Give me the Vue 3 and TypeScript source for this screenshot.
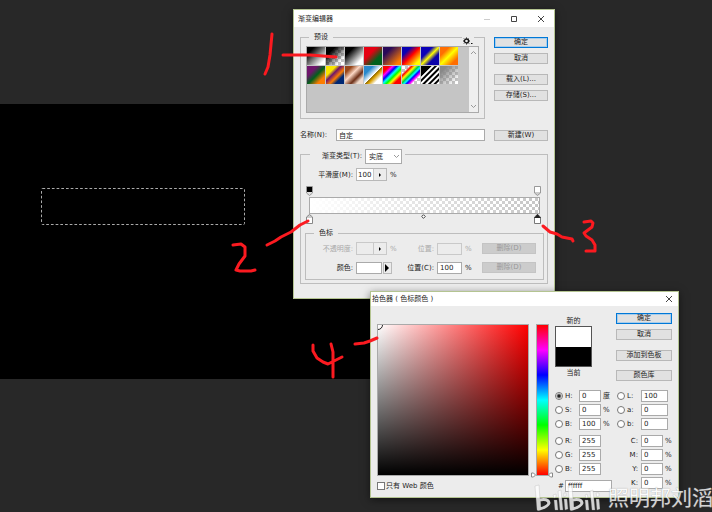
<script setup lang="ts">
import { ref } from 'vue'

interface Channel {
  id: string
  label: string
  value: string
  unit: string
  radio: boolean
  wide?: boolean
}

const presets: string[] = [
  'fg-bg', 'fg-clear', 'black-white', 'red-green', 'violet-orange', 'blue-red-yellow', 'blue-yellow-blue', 'orange-yellow',
  'violet-green', 'yellow-violet', 'copper', 'chrome', 'spectrum', 'rainbow', 'stripes', 'density',
]

const name = ref('自定')
const kind = ref('实底')
const smoothness = ref('100')
const stopPosition = ref('100')
const picked = ref('h')
const webOnly = ref(false)
const hue = ref(0)
const hex = ref('ffffff')

const leftTop = ref<Channel[]>([
  { id: 'h', label: 'H:', value: '0', unit: '度', radio: true },
  { id: 's', label: 'S:', value: '0', unit: '%', radio: true },
  { id: 'br', label: 'B:', value: '100', unit: '%', radio: true },
])
const leftBottom = ref<Channel[]>([
  { id: 'r', label: 'R:', value: '255', unit: '', radio: true },
  { id: 'g', label: 'G:', value: '255', unit: '', radio: true },
  { id: 'bl', label: 'B:', value: '255', unit: '', radio: true },
])
const rightTop = ref<Channel[]>([
  { id: 'l', label: 'L:', value: '100', unit: '', radio: true, wide: true },
  { id: 'la', label: 'a:', value: '0', unit: '', radio: true, wide: true },
  { id: 'lb', label: 'b:', value: '0', unit: '', radio: true, wide: true },
])
const rightBottom = ref<Channel[]>([
  { id: 'c', label: 'C:', value: '0', unit: '%', radio: false },
  { id: 'm', label: 'M:', value: '0', unit: '%', radio: false },
  { id: 'y', label: 'Y:', value: '0', unit: '%', radio: false },
  { id: 'k', label: 'K:', value: '0', unit: '%', radio: false },
])
const columns = [
  { key: 'left', groups: [leftTop, leftBottom] },
  { key: 'right', groups: [rightTop, rightBottom] },
]
</script>

<template>
  <main class="desktop">
    <div class="canvas">
      <svg class="marquee" viewBox="0 0 204 37" aria-hidden="true">
        <rect x="0.5" y="0.5" width="203" height="36" rx="1" />
      </svg>
    </div>

    <section class="window editor" aria-label="渐变编辑器">
      <header class="titlebar">
        <h1>渐变编辑器</h1>
        <div class="controls">
          <button type="button" aria-label="最小化" disabled>
            <svg viewBox="0 0 8 8"><path d="M1 4.5H7" stroke="#ccc" /></svg>
          </button>
          <button type="button" aria-label="最大化">
            <svg viewBox="0 0 8 8"><path d="M1.5 1.5H6.5V6.5H1.5Z" stroke="#444" /></svg>
          </button>
          <button type="button" aria-label="关闭">
            <svg viewBox="0 0 8 8"><path d="M1 1L7 7M7 1L1 7" stroke="#444" /></svg>
          </button>
        </div>
      </header>

      <div class="editor-body">
        <div class="top">
          <fieldset class="group preset-group">
            <legend>预设</legend>
            <button type="button" class="gear" aria-label="预设菜单">
              <svg viewBox="0 0 10 8">
                <circle cx="3.5" cy="4" r="2" fill="none" stroke="#111" stroke-width="1.3" />
                <path d="M3.5 .5V1.5M3.5 6.5V7.5M0 4H1M6 4H7M1 1.5L1.8 2.3M5.2 5.7L6 6.5M6 1.5L5.2 2.3M1.8 5.7L1 6.5" stroke="#111" />
                <path d="M8 6H9.5V7H8Z" fill="#111" />
              </svg>
            </button>
            <div class="preset-box">
              <div class="preset-grid">
                <button v-for="p in presets" :key="p" type="button" class="preset" :class="p" :aria-label="p"></button>
              </div>
              <div class="scrollbar">
                <svg viewBox="0 0 7 5"><path d="M1 4L3.5 1.5L6 4" /></svg>
                <svg viewBox="0 0 7 5"><path d="M1 1L3.5 3.5L6 1" /></svg>
              </div>
            </div>
          </fieldset>
          <div class="actions">
            <button type="button" class="btn primary">确定</button>
            <button type="button" class="btn">取消</button>
            <button type="button" class="btn spaced">载入(L)...</button>
            <button type="button" class="btn">存储(S)...</button>
          </div>
        </div>

        <div class="name-row">
          <label for="name">名称(N):</label>
          <input id="name" v-model="name" class="field" type="text" />
          <button type="button" class="btn">新建(W)</button>
        </div>

        <fieldset class="group type-group">
          <legend class="type-legend">
            <label for="kind">渐变类型(T):</label>
            <span class="select-wrap">
              <select id="kind" v-model="kind">
                <option>实底</option>
              </select>
              <svg viewBox="0 0 7 5"><path d="M1 1L3.5 3.5L6 1" /></svg>
            </span>
          </legend>
          <div class="smooth-row">
            <label for="smooth">平滑度(M):</label>
            <span class="combo">
              <input id="smooth" v-model="smoothness" type="text" />
              <button type="button" aria-label="平滑度滑块"><svg viewBox="0 0 4 6"><path d="M1 1L3 3L1 5Z" /></svg></button>
            </span>
            <span>%</span>
          </div>

          <div class="ramp">
            <div class="stops">
              <button type="button" aria-label="起点不透明度">
                <svg viewBox="0 0 7 10"><path d="M.5 .5H6.5V7L3.5 9.5L.5 7Z" fill="#ddd" stroke="#999" /><path d="M1 1H6V6H1Z" fill="#000" /></svg>
              </button>
              <button type="button" aria-label="终点不透明度">
                <svg viewBox="0 0 7 10"><path d="M.5 .5H6.5V7L3.5 9.5L.5 7Z" fill="#ccc" stroke="#999" /><path d="M1 1H6V6H1Z" fill="#fff" /></svg>
              </button>
            </div>
            <div class="ramp-bar"></div>
            <div class="stops">
              <button type="button" aria-label="起点颜色">
                <svg viewBox="0 0 7 10"><path d="M.5 9.5H6.5V3L3.5 .5L.5 3Z" fill="#ccc" stroke="#888" /><path d="M1 4H6V9H1Z" fill="#fff" /></svg>
              </button>
              <svg class="midpoint" viewBox="0 0 5 5"><path d="M2.5 .7L4.3 2.5L2.5 4.3L.7 2.5Z" fill="#fff" stroke="#444" /></svg>
              <button type="button" aria-label="终点颜色">
                <svg viewBox="0 0 7 10"><path d="M.5 9.5H6.5V3L3.5 .5L.5 3Z" fill="#fff" stroke="#777" /><path d="M0 4L3.5 0L7 4Z" fill="#222" /></svg>
              </button>
            </div>
          </div>

          <fieldset class="group stop-group">
            <legend>色标</legend>
            <div class="stop-row disabled">
              <label for="opacity">不透明度:</label>
              <span class="combo">
                <input id="opacity" type="text" disabled />
                <button type="button" disabled aria-label="不透明度滑块"><svg viewBox="0 0 4 6"><path d="M1 1L3 3L1 5Z" /></svg></button>
              </span>
              <span>%</span>
              <label for="opos">位置:</label>
              <input id="opos" class="field" type="text" disabled />
              <span>%</span>
              <button type="button" class="btn" disabled>删除(D)</button>
            </div>
            <div class="stop-row">
              <label for="color">颜色:</label>
              <span class="color-combo">
                <button id="color" type="button" class="color-well" aria-label="颜色"></button>
                <button type="button" class="color-arrow" aria-label="颜色菜单"><svg viewBox="0 0 5 8"><path d="M0 0L4 4L0 8Z" /></svg></button>
              </span>
              <span></span>
              <label for="cpos">位置(C):</label>
              <input id="cpos" v-model="stopPosition" class="field" type="text" />
              <span>%</span>
              <button type="button" class="btn" disabled>删除(D)</button>
            </div>
          </fieldset>
        </fieldset>
      </div>
    </section>

    <section class="window picker" aria-label="拾色器">
      <header class="titlebar">
        <h1>拾色器 ( 色标颜色 )</h1>
        <div class="controls">
          <button type="button" aria-label="关闭">
            <svg viewBox="0 0 8 8"><path d="M1 1L7 7M7 1L1 7" stroke="#444" /></svg>
          </button>
        </div>
      </header>
      <div class="picker-body">
        <div class="spectrum-side">
          <div class="spectra">
            <div class="sv-field">
              <svg viewBox="0 0 5 5"><path d="M4.5 0A4.5 4.5 0 0 1 0 4.5" /></svg>
            </div>
            <div class="hue-wrap">
              <input v-model.number="hue" class="hue" type="range" min="0" max="359" aria-label="色相" />
              <svg class="hue-handles" viewBox="0 0 22 6"><path d="M.5 1V5H2.5L4.5 3L2.5 1ZM21.5 1V5H19.5L17.5 3L19.5 1Z" /></svg>
            </div>
          </div>
          <label class="web"><input v-model="webOnly" type="checkbox" />只有 Web 颜色</label>
        </div>

        <div class="value-side">
          <div class="value-top">
            <div class="compare">
              <span>新的</span>
              <div class="chips"><i class="new"></i><i class="current"></i></div>
              <span>当前</span>
            </div>
            <div class="actions">
              <button type="button" class="btn primary">确定</button>
              <button type="button" class="btn">取消</button>
              <button type="button" class="btn spaced">添加到色板</button>
              <button type="button" class="btn wider">颜色库</button>
            </div>
          </div>
          <div class="channels">
            <div v-for="col in columns" :key="col.key" class="channel-col" :class="col.key">
              <div v-for="(group, gi) in col.groups" :key="gi" class="channel-group">
                <div v-for="ch in group.value" :key="ch.id" class="channel">
                  <input v-if="ch.radio" v-model="picked" type="radio" name="channel" :value="ch.id" :aria-label="ch.label" />
                  <label :for="ch.id" :class="{ plain: !ch.radio }">{{ ch.label }}</label>
                  <input :id="ch.id" v-model="ch.value" class="field" :class="{ wide: ch.wide }" type="text" />
                  <span>{{ ch.unit }}</span>
                </div>
              </div>
              <div v-if="col.key === 'left'" class="hex">
                <label for="hex">#</label>
                <input id="hex" v-model="hex" class="field" type="text" />
              </div>
            </div>
          </div>
        </div>
      </div>
    </section>

    <svg class="notes" viewBox="0 0 712 512" aria-hidden="true">
      <path d="M272 34L270 55L268 67L265 74" />
      <path d="M283 55L310 55L336 57" />
      <path d="M233 245L241 244L245 247V256L239 264L236 270L240 271L251 271L255 270" />
      <path d="M267 245L275 241L281 237L291 232L300 225L308 221" />
      <path d="M543 226L550 232L557 234L562 237L572 239L573 241" />
      <path d="M584 222L591 221L593 223L592 227L584 233L586 236L592 240L595 245V251L586 251" />
      <path d="M355 344L364 343L370 341L377 338" />
      <path d="M313 345V351L317 358L323 362L328 364L334 361L342 357M331 344L333 352V377" />
    </svg>

    <div class="watermark">
      <svg viewBox="0 0 68 28" aria-hidden="true">
        <path class="stem" d="M3 2L7 1L8 16L9 26L5 26ZM36 2L40 1L41 16L42 26L38 26ZM22 16L25 16L26 26L23 26ZM26 7L29 6L31 26L28 26ZM32 15L35 15L36 25L33 26ZM53 16L56 16L57 26L54 26ZM58 7L61 6L63 26L60 26ZM64 15L67 15L68 25L65 26ZM21 11L24 10V13L22 14ZM32 9L34 9V12L32 13ZM53 11L55 10L56 13L54 14ZM64 9L67 9V12L65 13Z" />
        <path class="bowl" d="M7 16Q16 14 17 19Q16 23 7 25ZM40 16Q49 14 50 19Q49 23 40 25Z" />
      </svg>
      <span>照明邦刘滔</span>
    </div>
  </main>
</template>

<style>
body {
  background: #282828;
}
</style>

<style scoped>
* {
  box-sizing: border-box;
}
.desktop {
  position: relative;
  min-height: 100vh;
  padding-top: 104px;
  overflow: hidden;
  background: #282828;
  color: #222;
  font: 7px/10px "DejaVu Sans", "Noto Sans CJK SC", sans-serif;
}
button,
input,
select {
  margin: 0;
  padding: 0;
  border: 0;
  background: none;
  color: inherit;
  font: inherit;
}
svg {
  display: block;
}
.canvas {
  width: 60%;
  height: 275px;
  padding: 84px 0 0 41px;
  background: #000;
}
.marquee {
  width: 204px;
  height: 37px;
}
.marquee rect {
  fill: none;
  stroke: #aaa;
  stroke-dasharray: 2.7 2;
}
.window {
  position: absolute;
  border: 1px solid #b4c491;
  background: #ececec;
  box-shadow: 0 2px 8px rgba(0, 0, 0, 0.5);
}
.editor {
  left: 293px;
  top: 9px;
  width: 262px;
}
.picker {
  left: 370px;
  top: 291px;
  width: 309px;
}
.titlebar {
  display: flex;
  align-items: center;
  justify-content: space-between;
  height: 17px;
  padding: 0 9px 0 4px;
  background: #fff;
}
.picker .titlebar {
  height: 14px;
  padding: 0 5px 0 1px;
}
h1 {
  margin: 0;
  font: inherit;
}
.controls {
  display: flex;
  gap: 19px;
}
.controls svg {
  width: 8px;
  height: 8px;
  fill: none;
}
.editor-body {
  padding: 5px 6px 14px;
}
.top {
  display: grid;
  grid-template-columns: 1fr 54px;
  gap: 9px;
}
.group {
  position: relative;
  min-width: 0;
  margin: 0;
  padding: 0;
  border: 1px solid #bdbdbd;
}
.group legend {
  margin-left: 8px;
  padding: 0 5px;
}
.preset-group {
  padding: 4px 5px 5px;
}
.preset-group legend {
  margin-left: 3px;
}
.gear {
  position: absolute;
  top: -5px;
  right: 10px;
  padding: 0 1px;
  background: #ececec;
}
.gear svg {
  width: 10px;
  height: 8px;
}
.preset-box {
  display: flex;
  justify-content: space-between;
  height: 67px;
  border: 1px solid #aaa;
  background: #c5c5c5;
}
.preset-grid {
  display: grid;
  grid-template-columns: repeat(8, 18px);
  grid-auto-rows: 18px;
  align-content: start;
  gap: 1px;
}
.preset {
  --checker: repeating-conic-gradient(#c4c4c4 0 25%, #fff 0 50%) 0 0 / 6px 6px;
}
.fg-bg { background: linear-gradient(135deg, #000 20%, #fff 85%); }
.fg-clear { background: linear-gradient(135deg, #000 25%, transparent 80%), var(--checker); }
.black-white { background: linear-gradient(135deg, #000 25%, #fff 80%); }
.red-green { background: linear-gradient(135deg, #e60012 35%, #00601b 70%); }
.violet-orange { background: linear-gradient(135deg, #290a59 25%, #ff7c00 85%); }
.blue-red-yellow { background: linear-gradient(135deg, #0a00b2 25%, #f00 50%, #fffc00 85%); }
.blue-yellow-blue { background: linear-gradient(135deg, #0b01b8 32%, #fdfa03 50%, #0b02aa 68%); }
.orange-yellow { background: linear-gradient(135deg, #ff6e02 25%, #ff0 50%, #ff6d00 80%); }
.violet-green { background: linear-gradient(135deg, #6f156c 28%, #00601b 52%, #fd7c00 78%); }
.yellow-violet { background: linear-gradient(135deg, #f9e600 28%, #6f156c 42%, #fd7c00 60%, #002874 75%); }
.copper { background: linear-gradient(135deg, #97461a 20%, #fbd8c5 42%, #6c2e16 65%, #efdbcd 82%); }
.chrome { background: linear-gradient(135deg, #2989cc 25%, #fff 50%, #906a00 53%, #d99f00 60%, #fff 78%); }
.spectrum { background: linear-gradient(135deg, #f00 18%, #f0f 28%, #00f 38%, #0ff 48%, #0f0 58%, #ff0 68%, #f00 80%); }
.rainbow { background: linear-gradient(135deg, transparent 20%, #f00 27%, #ff0 37%, #0c4 47%, #0ff 55%, #00f 62%, #f0f 70%, transparent 78%), var(--checker); }
.stripes { background: linear-gradient(135deg, #000 28%, transparent 28%), repeating-linear-gradient(135deg, #fff 0 1px, #000 2px 3px, #fff 4px); }
.density { background: linear-gradient(135deg, #888 20%, transparent 90%), var(--checker); }
.scrollbar {
  display: flex;
  flex-direction: column;
  justify-content: space-between;
  width: 9px;
  padding: 3px 1px;
  background: #efefef;
}
.scrollbar svg,
.select-wrap svg {
  width: 7px;
  height: 5px;
  fill: none;
  stroke: #999;
}
.actions {
  display: flex;
  flex-direction: column;
  gap: 5px;
}
.top .actions {
  padding-top: 5px;
}
.btn {
  height: 11px;
  border: 1px solid #b8b8b8;
  background: #e1e1e1;
  line-height: 9px;
  text-align: center;
  white-space: nowrap;
}
.btn.primary {
  border-color: #0078d7;
  box-shadow: inset 0 0 0 1px #a9cdea;
}
.btn.spaced {
  margin-top: 5px;
}
.btn.wider {
  margin-top: 4px;
}
.btn:disabled {
  border-color: #c4c4c4;
  background: #ccc;
  color: #999;
}
.field {
  min-width: 0;
  height: 12px;
  padding: 0 2px;
  border: 1px solid #aaa;
  background: #fff;
}
.name-row {
  display: grid;
  grid-template-columns: 36px 1fr 54px;
  align-items: center;
  margin-top: 10px;
}
.name-row .field {
  margin-right: 9px;
}
.type-group {
  margin-top: 8px;
  padding: 8px 3px 3px 4px;
}
.group .type-legend {
  display: flex;
  height: 11px;
  margin-left: 5px;
  padding: 0 3px 0 12px;
  line-height: 15px;
}
.select-wrap {
  position: relative;
  height: 15px;
  margin-left: 3px;
}
.select-wrap svg {
  position: absolute;
  right: 2px;
  top: 5px;
}
select {
  appearance: none;
  width: 37px;
  height: 15px;
  padding-left: 3px;
  border: 1px solid #aaa;
  background: #fff;
  vertical-align: top;
}
.smooth-row {
  display: grid;
  grid-template-columns: 48px 31px 1fr;
  gap: 3px;
  align-items: center;
}
.smooth-row label,
.stop-row label {
  text-align: right;
  white-space: nowrap;
}
.combo {
  display: flex;
  height: 13px;
  border: 1px solid #b8b8b8;
}
.combo input {
  width: 17px;
  padding-left: 1px;
  border-right: 1px solid #c8c8c8;
  background: #fff;
}
.combo button {
  display: flex;
  flex: 1;
  align-items: center;
  justify-content: center;
}
.combo svg {
  width: 4px;
  height: 6px;
}
.ramp {
  margin-top: 5px;
}
.stops {
  display: flex;
  justify-content: space-between;
  padding: 0 3px 0 1px;
}
.stops button svg {
  width: 7px;
  height: 10px;
}
.midpoint {
  width: 5px;
  height: 5px;
}
.ramp-bar {
  height: 17px;
  margin: 1px 4px 0;
  border: 1px solid #aaa;
  background:
    linear-gradient(90deg, #fff, transparent),
    repeating-conic-gradient(#c6c6c6 0 25%, #fff 0 50%) 0 0 / 6px 6px;
}
.stop-group {
  margin-top: 4px;
  padding: 4px 7px 5px 0;
}
.stop-row {
  display: grid;
  grid-template-columns: 47px 31px 8px 33px 25px 1fr 54px;
  gap: 3px;
  align-items: center;
  height: 13px;
}
.stop-row + .stop-row {
  margin-top: 6px;
}
.stop-row.disabled {
  color: #aaa;
}
.disabled .field,
.disabled .combo,
.disabled .combo input {
  border-color: #c9c9c9;
  background: #ececec;
}
.color-combo {
  display: flex;
  gap: 1px;
  margin-right: -5px;
}
.color-well {
  width: 26px;
  height: 12px;
  border: 1px solid #aaa;
  background: #fff;
}
.color-arrow {
  display: grid;
  place-items: center;
  width: 9px;
  height: 12px;
  border: 1px solid #bbb;
}
.color-arrow svg {
  width: 5px;
  height: 8px;
}
.picker-body {
  display: flex;
  gap: 6px;
  padding: 7px 6px 5px;
}
.spectrum-side {
  padding-top: 11px;
}
.spectra {
  display: flex;
  gap: 7px;
}
.sv-field {
  width: 152px;
  height: 152px;
  border: 1px solid #aaa;
  background:
    linear-gradient(0deg, #000, transparent),
    linear-gradient(90deg, #fff, #f00);
}
.sv-field svg {
  width: 5px;
  height: 5px;
  fill: none;
  stroke: #222;
}
.hue-wrap {
  position: relative;
}
.hue {
  display: block;
  appearance: none;
  writing-mode: vertical-lr;
  width: 13px;
  height: 152px;
  border: 1px solid #aaa;
  background: linear-gradient(#f00, #f0f, #00f, #0ff, #0f0, #ff0, #f00);
}
.hue::-webkit-slider-thumb {
  appearance: none;
  width: 11px;
  height: 1px;
  background: transparent;
}
.hue-handles {
  position: absolute;
  bottom: -2px;
  left: -5px;
  width: 22px;
  height: 6px;
  fill: #fff;
  stroke: #888;
}
.web {
  display: flex;
  gap: 1px;
  align-items: center;
  margin-top: 5px;
}
input[type="checkbox"] {
  appearance: none;
  width: 8px;
  height: 8px;
  border: 1px solid #777;
  background: #fff;
}
input[type="radio"] {
  appearance: none;
  flex: none;
  width: 8px;
  height: 8px;
  border: 1px solid #777;
  border-radius: 50%;
  background: #fff;
}
input[type="radio"]:checked {
  background: radial-gradient(circle, #222 1px, #fff 3px);
}
.value-side {
  flex: 1;
}
.value-top {
  display: flex;
  justify-content: space-between;
}
.value-top .actions {
  width: 56px;
}
.compare {
  padding-top: 3px;
  text-align: center;
}
.chips {
  display: grid;
  width: 37px;
  height: 41px;
  margin: 0 0 1px;
  border: 1px solid #555;
}
.new {
  background: #fff;
}
.current {
  background: #000;
}
.channels {
  display: grid;
  grid-template-columns: 62px 1fr;
  margin-top: 9px;
}
.channel-group {
  display: grid;
  gap: 2px;
}
.channel-group + .channel-group {
  margin-top: 5px;
}
.channel {
  display: flex;
  align-items: center;
  height: 12px;
}
.channel label {
  width: 16px;
  padding-left: 2px;
}
.channel label.plain {
  width: 24px;
  padding-right: 3px;
  text-align: right;
}
.channel .field {
  width: 22px;
  margin-right: 2px;
}
.channel .field.wide {
  width: 27px;
}
.hex {
  display: flex;
  gap: 1px;
  align-items: center;
  margin-top: 5px;
  padding-left: 3px;
}
.hex .field {
  width: 47px;
}
.notes {
  position: absolute;
  top: 0;
  left: 0;
  width: 712px;
  height: 512px;
  fill: none;
  stroke: #fb1a20;
  stroke-width: 3;
  stroke-linecap: round;
  stroke-linejoin: round;
  pointer-events: none;
}
.watermark {
  position: absolute;
  top: 484px;
  left: 532px;
  display: flex;
  gap: 8px;
  align-items: center;
  color: #fff;
  font-size: 21px;
  line-height: 28px;
  white-space: nowrap;
  opacity: 0.8;
  text-shadow: 0 0 1px #777;
}
.watermark svg {
  width: 68px;
  height: 28px;
}
.stem {
  fill: #fff;
  stroke: #999;
  stroke-width: 0.3;
}
.bowl {
  fill: none;
  stroke: #fff;
  stroke-width: 3;
}
</style>
